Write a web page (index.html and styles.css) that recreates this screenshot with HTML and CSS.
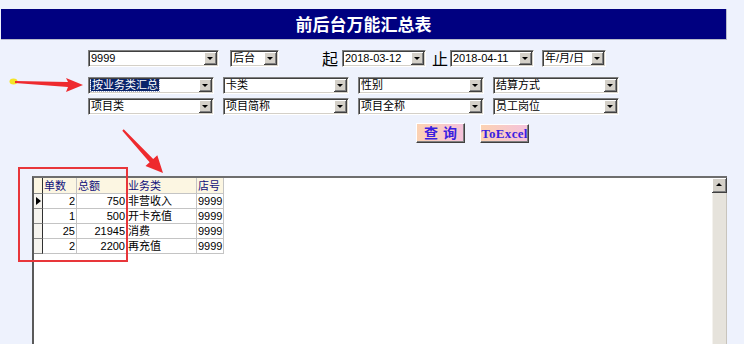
FILE: index.html
```html
<html lang="zh-CN">
  <head>
    <meta charset="UTF-8" />
    <meta name="viewport" content="width=device-width, initial-scale=1.0" />
    <title>前后台万能汇总表</title>
    <link rel="stylesheet" href="styles.css">
  </head>
  <body>
    <div class="page">
      <div class="title">前后台万能汇总表</div>

      <div class="row row-top">
        <div class="combo w-shop"><span class="val">9999</span><span class="drop"></span></div>
        <div class="combo w-side"><span class="val">后台</span><span class="drop"></span></div>
        <span class="lbl lbl-from">起</span>
        <div class="combo w-date"><span class="val">2018-03-12</span><span class="drop"></span></div>
        <span class="lbl lbl-to">止</span>
        <div class="combo w-date"><span class="val">2018-04-11</span><span class="drop"></span></div>
        <div class="combo w-unit"><span class="val">年/月/日</span><span class="drop"></span></div>
      </div>

      <div class="row row-grid row-2">
        <div class="combo"><span class="val"><span class="sel">按业务类汇总</span></span><span class="drop"></span></div>
        <div class="combo"><span class="val">卡类</span><span class="drop"></span></div>
        <div class="combo"><span class="val">性别</span><span class="drop"></span></div>
        <div class="combo"><span class="val">结算方式</span><span class="drop"></span></div>
      </div>
      <div class="row row-grid row-3">
        <div class="combo"><span class="val">项目类</span><span class="drop"></span></div>
        <div class="combo"><span class="val">项目简称</span><span class="drop"></span></div>
        <div class="combo"><span class="val">项目全称</span><span class="drop"></span></div>
        <div class="combo"><span class="val">员工岗位</span><span class="drop"></span></div>
      </div>

      <div class="row row-btns">
        <span class="btn btn-query">查询</span>
        <span class="btn btn-excel">ToExcel</span>
      </div>

      <div class="grid">
        <div class="grid-body">
          <table class="data">
            <tr class="head">
              <th class="ind"></th>
              <th class="c-num">单数</th>
              <th class="c-sum">总额</th>
              <th class="c-type">业务类</th>
              <th class="c-shop">店号</th>
            </tr>
            <tr>
              <td class="ind cur"><span class="tri"></span></td>
              <td class="r">2</td><td class="r">750</td><td>非营收入</td><td>9999</td>
            </tr>
            <tr>
              <td class="ind"></td>
              <td class="r">1</td><td class="r">500</td><td>开卡充值</td><td>9999</td>
            </tr>
            <tr>
              <td class="ind"></td>
              <td class="r">25</td><td class="r">21945</td><td>消费</td><td>9999</td>
            </tr>
            <tr>
              <td class="ind"></td>
              <td class="r">2</td><td class="r">2200</td><td>再充值</td><td>9999</td>
            </tr>
          </table>
        </div>
        <div class="vscroll">
          <span class="up"><span class="tri-up"></span></span>
          <span class="track"></span>
        </div>
      </div>

      <!-- annotation marks drawn over the screenshot -->
      <svg class="marks" width="744" height="344" viewBox="0 0 744 344">
        <ellipse cx="13.5" cy="81.5" rx="4" ry="3" fill="#f4e428" />
        <polygon fill="#ee2a2e" points="15,81 68,82 66,78 83,85 66,92 68,87 15,83" />
        <polygon fill="#ee2a2e" points="123.7,129.3 153.2,158.9 157.3,155.2 163,173 145.5,166 149.6,162.3 122.3,130.7" />
        <rect x="19" y="168" width="108" height="93" fill="none" stroke="#e8363a" stroke-width="2" />
      </svg>
    </div>
  </body>
</html>
```

FILE: styles.css
```css
body {
  margin: 0;
  background-color: #eef2fd;
  font-family: "Liberation Sans", "Noto Sans CJK SC", sans-serif;
  font-size: 11px;
  color: #000;
  overflow: hidden;
}
.page {
  position: relative;
  width: 744px;
  height: 344px;
  padding-top: 9px;
  box-sizing: border-box;
  overflow: hidden;
}
.title {
  margin-left: 1px;
  width: 726px;
  height: 31px;
  box-sizing: border-box;
  background-color: #000080;
  border-right: 1px solid #b8bccc;
  border-bottom: 1px solid #b8bccc;
  color: #fff;
  font-family: "Noto Sans CJK SC", sans-serif;
  font-weight: bold;
  font-size: 17px;
  line-height: 30px;
  text-align: center;
}
.row {
  display: flex;
  align-items: center;
  padding-left: 88px;
}
.row-top {
  margin-top: 10px;
}
.row-grid {
  display: grid;
  grid-template-columns: 126px 126px 126px 126px;
  column-gap: 9px;
}
.row-2 {
  margin-top: 10px;
}
.row-3 {
  margin-top: 4px;
}
.row-btns {
  margin-top: 8px;
  padding-left: 416px;
  gap: 15px;
}

/* windows style combo box */
.combo {
  display: flex;
  height: 17px;
  box-sizing: border-box;
  background-color: #fff;
  border: 1px solid;
  border-color: #808080 #ffffff #ffffff #808080;
  box-shadow: inset 1px 1px 0 #404040, inset -1px -1px 0 #d4d0c8;
  padding: 1px;
}
.combo .val {
  flex: 1;
  padding-left: 1px;
  line-height: 13px;
  white-space: nowrap;
  overflow: hidden;
}
.combo .sel {
  background-color: #0a246a;
  color: #fff;
  padding: 0 1px;
  outline: 1px dotted #9aa4c8;
}
.drop {
  position: relative;
  width: 13px;
  background-color: #d4d0c8;
  box-shadow: inset -1px -1px 0 #404040, inset 1px 1px 0 #ffffff, inset -2px -2px 0 #808080;
}
.drop::after {
  content: "";
  position: absolute;
  left: 3px;
  top: 5px;
  border-left: 3px solid transparent;
  border-right: 3px solid transparent;
  border-top: 3px solid #000;
}
.w-shop {
  width: 131px;
}
.w-side {
  width: 49px;
  margin-left: 11px;
}
.w-date {
  width: 84px;
}
.w-unit {
  width: 64px;
  margin-left: 8px;
}
.lbl {
  width: 16px;
  font-family: "Noto Sans CJK SC", sans-serif;
  font-size: 16px;
  line-height: 17px;
  text-align: center;
}
.lbl-from {
  margin-left: 43px;
  margin-right: 4px;
}
.lbl-to {
  margin-left: 6px;
  margin-right: 2px;
}

.btn {
  display: inline-block;
  width: 49px;
  height: 20px;
  box-sizing: border-box;
  border: 1px solid;
  border-color: #ffffff #404040 #404040 #ffffff;
  box-shadow: inset -1px -1px 0 #808080;
  background: linear-gradient(90deg, #fcd2b2, #f4c2dc);
  color: #3a1ee0;
  font-weight: bold;
  text-align: center;
  cursor: pointer;
}
.btn-query {
  font-family: "Noto Sans CJK SC", sans-serif;
  font-size: 14px;
  line-height: 17px;
  letter-spacing: 5px;
  text-indent: 5px;
}
.btn-excel {
  height: 19px;
  margin-top: 1px;
  font-family: "Liberation Serif", serif;
  font-size: 13px;
  line-height: 17px;
  letter-spacing: 0.3px;
}

/* data grid */
.grid {
  display: flex;
  margin-top: 33px;
  margin-left: 32px;
  width: 695px;
  height: 168px;
  box-sizing: border-box;
  border-top: 2px solid #6e6e6e;
  border-left: 2px solid #5a5a5a;
  background-color: #fff;
}
.grid-body {
  flex: 1;
}
.data {
  border-collapse: separate;
  border-spacing: 0;
  table-layout: fixed;
}
.data th,
.data td {
  box-sizing: border-box;
  height: 15px;
  padding: 0 1px;
  border-right: 1px solid #c4c4c4;
  border-bottom: 1px solid #c4c4c4;
  font-size: 11px;
  line-height: 14px;
  white-space: nowrap;
  text-align: left;
}
.data .head th {
  height: 16px;
  background-color: #fcf6e2;
  color: #10107a;
  font-weight: normal;
}
.data td.r {
  text-align: right;
}
.data .ind {
  width: 9px;
  padding: 0;
  background-color: #f6f4ef;
  border-right: 1px solid #303030;
  border-bottom: 1px solid #8a8a8a;
}
.c-num {
  width: 34px;
}
.c-sum {
  width: 50px;
}
.c-type {
  width: 70px;
}
.c-shop {
  width: 27px;
}
.cur {
  position: relative;
}
.tri {
  position: absolute;
  left: 2px;
  top: 3px;
  border-top: 4px solid transparent;
  border-bottom: 4px solid transparent;
  border-left: 5px solid #000;
}

.vscroll {
  display: flex;
  flex-direction: column;
  width: 15px;
  background-color: #e6e3dc;
}
.up {
  position: relative;
  height: 15px;
  box-sizing: border-box;
  background-color: #d4d0c8;
  box-shadow: inset -1px -1px 0 #404040, inset 1px 1px 0 #ffffff, inset -2px -2px 0 #808080;
}
.tri-up {
  position: absolute;
  left: 4px;
  top: 5px;
  border-left: 3px solid transparent;
  border-right: 3px solid transparent;
  border-bottom: 3px solid #000;
}
.track {
  flex: 1;
  border-left: 1px solid #f4f2ee;
  border-right: 1px solid #c8c4bc;
}

.marks {
  position: absolute;
  left: 0;
  top: 0;
  pointer-events: none;
}
```
